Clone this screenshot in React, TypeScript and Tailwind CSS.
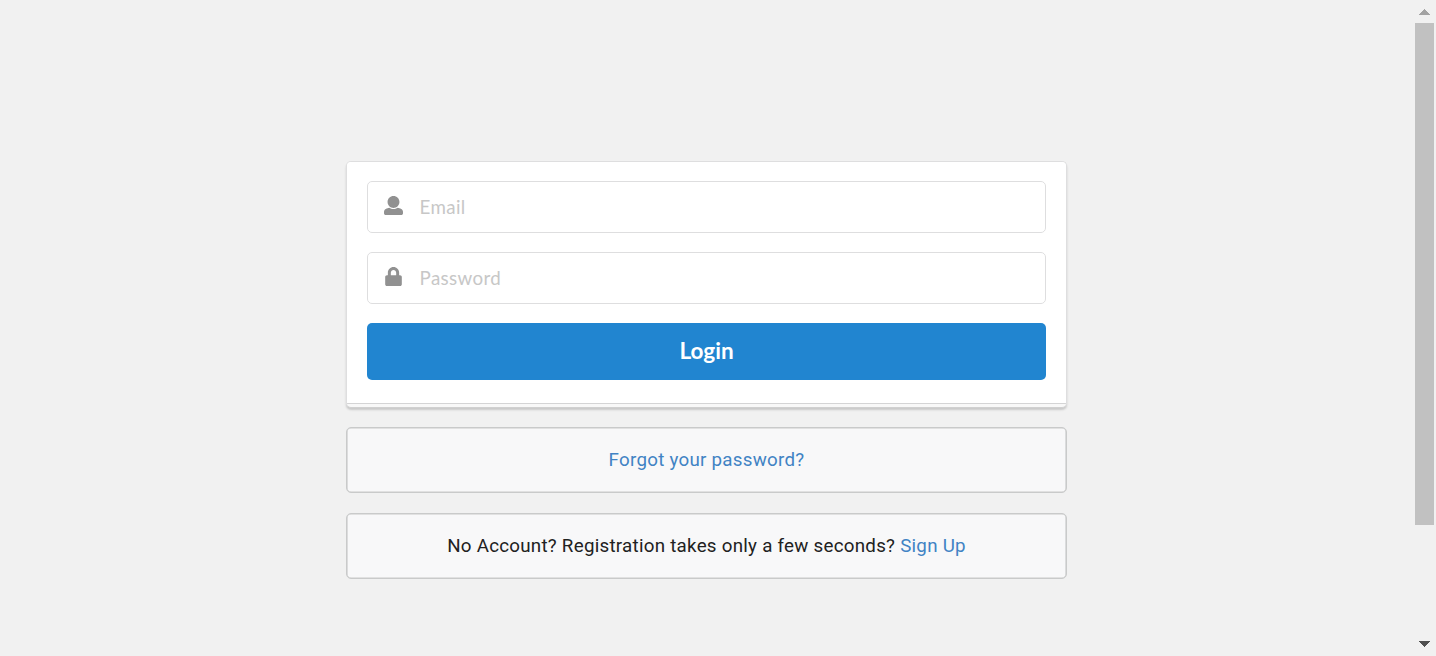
import type { ReactNode } from "react";
import { FaLock } from "react-icons/fa";

function UserIcon() {
  return (
    <svg viewBox="0 0 512 512" fill="currentColor" className="size-[19px]">
      <path d="M256 0c88.366 0 160 71.634 160 160s-71.634 160-160 160S96 248.366 96 160 167.634 0 256 0zm183.283 333.821l-71.313-17.828c-74.923 53.89-165.738 41.864-223.94 0l-71.313 17.828C29.981 344.505 0 382.903 0 426.955V464c0 26.51 21.49 48 48 48h416c26.51 0 48-21.49 48-48v-37.045c0-44.052-29.981-82.45-72.717-93.134z" />
    </svg>
  );
}

function Field({ icon, label, type }: { icon: ReactNode; label: string; type: string }) {
  return (
    <label className="flex h-[52px] items-center rounded-[5px] border border-[#dededf] bg-white pl-[15.4px]">
      <span className="flex w-5 shrink-0 justify-center pb-[3px] text-[#919191]">{icon}</span>
      <input
        type={type}
        placeholder={label}
        aria-label={label}
        className="ml-[16.2px] min-w-0 flex-1 bg-transparent font-['Lato',sans-serif] text-[18.75px] leading-6 tracking-[0.36px] outline-none placeholder:text-[#c7c7c7]"
      />
    </label>
  );
}

function Message({ children }: { children: ReactNode }) {
  return (
    <div className="flex h-[66px] items-center justify-center rounded-[5px] border border-[#c9caca] bg-[#f8f8f9] pt-px text-[18.75px] tracking-[0.26px] text-[#212121] shadow-[inset_0_0_0_0.6px_#c9caca]">
      <p>{children}</p>
    </div>
  );
}

function Scrollbar() {
  return (
    <div className="flex h-full w-[23px] shrink-0 flex-col items-center bg-[#f1f1f1]" aria-hidden="true">
      <svg viewBox="0 0 23 23" className="size-[23px]" shapeRendering="crispEdges">
        <path d="M6 15 L11.5 9 L17 15Z" fill="#a3a3a3" />
      </svg>
      <div className="h-[502px] w-[19px] bg-[#c1c1c1]" />
      <svg viewBox="0 0 23 23" className="mt-auto size-[23px]" shapeRendering="crispEdges">
        <path d="M6 8 L11.5 14 L17 8Z" fill="#505050" />
      </svg>
    </div>
  );
}

export default function App() {
  return (
    <div className="flex h-[656px] w-full overflow-hidden bg-[#f1f1f1] font-['Roboto',sans-serif]">
      <main className="flex flex-1 justify-center pt-[161px]">
        <div className="flex w-[721px] flex-col">
          <form
            onSubmit={(e) => e.preventDefault()}
            className="h-[247px] overflow-hidden rounded-[5px] border border-[#dededf] border-b-[#d0d0d0] bg-[#f8f8f8] shadow-[0_2px_2px_0_#c9c9c9]"
          >
            <div className="flex h-[242px] flex-col gap-[19px] border-b border-[#d4d4d5] bg-white px-5 pt-[19px]">
              <Field icon={<UserIcon />} label="Email" type="email" />
              <Field icon={<FaLock size={19} />} label="Password" type="password" />
              <button className="h-[57px] shrink-0 rounded-[5px] bg-[#2185d0] pb-px font-['Lato',sans-serif] text-[22.5px] font-bold text-white">
                Login
              </button>
            </div>
          </form>
          <div className="mt-[19px] flex flex-col gap-5">
            <Message>
              <a href="#forgot" className="text-[#4183c4]">Forgot your password?</a>
            </Message>
            <Message>
              No Account? Registration takes only a few seconds? <a href="#signup" className="text-[#4183c4]">Sign Up</a>
            </Message>
          </div>
        </div>
      </main>
      <Scrollbar />
    </div>
  );
}
